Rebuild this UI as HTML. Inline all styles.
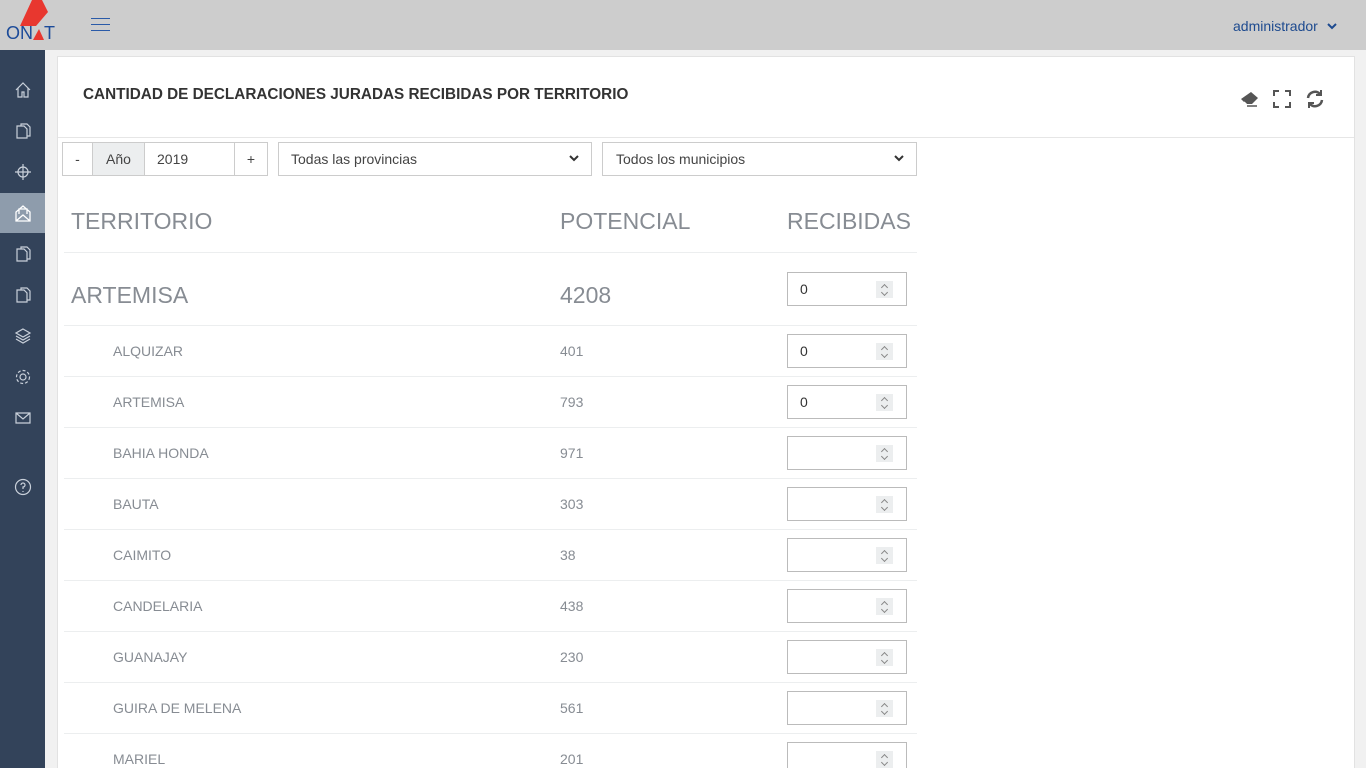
<!DOCTYPE html>
<html><head><meta charset="utf-8"><style>
*{box-sizing:border-box;margin:0;padding:0}
html,body{width:1366px;height:768px;overflow:hidden}
body{background:#f1f1f1;font-family:"Liberation Sans",sans-serif;position:relative}
.top{position:absolute;left:0;top:0;width:1366px;height:50px;background:#cdcdcd}
.side{position:absolute;left:0;top:50px;width:45px;height:718px;background:#33435a}
.side .it{position:absolute;left:0;width:45px;height:40px;display:flex;align-items:center;justify-content:center}
.panel{position:absolute;left:57px;top:56px;width:1298px;height:712px;background:#fff;border:1px solid #e2e2e2;border-bottom:none}
.ph{height:81px;border-bottom:1px solid #e6e6e6;position:relative}
.ph h1{position:absolute;left:25px;top:29px;font-size:15.3px;font-weight:bold;color:#333}
.ctl{position:absolute;top:142px;height:34px;border:1px solid #ccc;font-size:14px;color:#444;display:flex;align-items:center;background:#fff}
.chev{position:absolute;right:12px;top:12px}
.row{position:absolute;width:853px;border-bottom:1px solid #eceeef;color:#878c93}
.inp{position:absolute;left:723px;width:120px;height:34px;border:1px solid #bbb;font-size:14px;color:#333;padding-left:12px;line-height:32px}
.sp{position:absolute;right:13px;top:8px;width:17px;height:17px;background:#eceeef}
.sp:before{content:"";position:absolute;left:6px;top:4px;width:4px;height:4px;border-left:1px solid #888;border-top:1px solid #888;transform:rotate(45deg)}
.sp:after{content:"";position:absolute;left:6px;top:9px;width:4px;height:4px;border-right:1px solid #888;border-bottom:1px solid #888;transform:rotate(45deg)}
</style></head><body>
<div class="top">
<svg style="position:absolute;left:6px;top:0" width="52" height="42"><polygon points="26,0 36,0 42,12 30,26 14,26" fill="#e8372f"/>
<text x="0" y="39" font-family="Liberation Sans" font-size="18" fill="#1c4b99">ON</text><polygon points="27,40 38,40 33,29" fill="#e8372f"/><text x="38" y="39" font-family="Liberation Sans" font-size="18" fill="#1c4b99">T</text></svg>
<div style="position:absolute;left:91px;top:18px;width:19px;height:1px;background:#2a5aa8;box-shadow:0 6px 0 #2a5aa8,0 12px 0 #2a5aa8"></div>
<div style="position:absolute;left:1233px;top:18px;font-size:14px;color:#1d4a8f">administrador</div>
<svg style="position:absolute;left:1327px;top:23px" width="10" height="7" fill="none" stroke="#1d4a8f" stroke-width="2"><path d="M1 1l4 4 4-4"/></svg>
</div>
<div class="side">
<div class="it" style="top:20px"><svg width="18" height="18" fill="none" stroke="#c9d0da" stroke-width="1.2"><path d="M2 9 9 2l7 7M4 7v9h4v-5h2v5h4V7"/></svg></div>
<div class="it" style="top:61px"><svg width="18" height="18" fill="none" stroke="#c9d0da" stroke-width="1.2"><path d="M3 4h7l3 3v9H3zM7 4V2h6l3 3v9h-3"/></svg></div>
<div class="it" style="top:102px"><svg width="18" height="18" fill="none" stroke="#c9d0da" stroke-width="1.2"><circle cx="9" cy="9" r="5"/><path d="M9 1v16M1 9h16"/></svg></div>
<div class="it" style="top:143px;background:#8e9cac"><svg width="18" height="18" fill="none" stroke="#fff" stroke-width="1.3"><path d="M2 8v9h14V8L9 2zM2 17l7-6 7 6M5 10V5h8v5"/></svg></div>
<div class="it" style="top:184px"><svg width="18" height="18" fill="none" stroke="#c9d0da" stroke-width="1.2"><path d="M3 4h7l3 3v9H3zM7 4V2h6l3 3v9h-3"/></svg></div>
<div class="it" style="top:225px"><svg width="18" height="18" fill="none" stroke="#c9d0da" stroke-width="1.2"><path d="M3 4h7l3 3v9H3zM7 4V2h6l3 3v9h-3"/></svg></div>
<div class="it" style="top:266px"><svg width="18" height="18" fill="none" stroke="#c9d0da" stroke-width="1.2"><path d="M9 2l7 4-7 4-7-4zM2 9l7 4 7-4M2 12l7 4 7-4"/></svg></div>
<div class="it" style="top:307px"><svg width="18" height="18" fill="none" stroke="#c9d0da" stroke-width="1.2"><circle cx="9" cy="9" r="3"/><circle cx="9" cy="9" r="6.5" stroke-dasharray="3 2"/></svg></div>
<div class="it" style="top:348px"><svg width="18" height="18" fill="none" stroke="#c9d0da" stroke-width="1.2"><path d="M2 4h14v10H2zM2 4l7 6 7-6"/></svg></div>
<div class="it" style="top:417px"><svg width="18" height="18" fill="none" stroke="#c9d0da" stroke-width="1.2"><circle cx="9" cy="9" r="7.5"/><path d="M7 7a2 2 0 1 1 2 2v2M9 13v1"/></svg></div>
</div>
<div class="panel">
<div class="ph"><h1>CANTIDAD DE DECLARACIONES JURADAS RECIBIDAS POR TERRITORIO</h1>
<svg style="position:absolute;left:1182px;top:34px" width="20" height="16"><path d="M11 1l7 6-6 6H6L1 8z" fill="#555"/><path d="M4 11l3 3h6" stroke="#fff" stroke-width="1.5" fill="none"/><path d="M7 15h10" stroke="#555" stroke-width="1.5"/></svg>
<svg style="position:absolute;left:1215px;top:33px" width="18" height="18" fill="none" stroke="#555" stroke-width="2"><path d="M1 6V1h5M12 1h5v5M17 12v5h-5M6 17H1v-5"/></svg>
<svg style="position:absolute;left:1247px;top:32px" width="20" height="20" fill="none" stroke="#555" stroke-width="2.5"><path d="M3 9a7 7 0 0 1 12-4M17 11a7 7 0 0 1-12 4"/><path d="M16 1v5h-5M4 19v-5h5" stroke-width="2"/></svg>
</div>
</div>
<div class="ctl" style="left:62px;width:206px">
<span style="width:30px;text-align:center;border-right:1px solid #ccc;line-height:32px">-</span>
<span style="width:52px;text-align:center;background:#eceeef;border-right:1px solid #ccc;line-height:32px">Año</span>
<span style="width:90px;padding-left:12px;border-right:1px solid #ccc;line-height:32px">2019</span>
<span style="width:32px;text-align:center">+</span></div>
<div class="ctl" style="left:278px;width:314px;padding-left:12px">Todas las provincias<svg class="chev" width="10" height="8" fill="none" stroke="#333" stroke-width="2"><path d="M1 1l4 4 4-4"/></svg></div>
<div class="ctl" style="left:602px;width:315px;padding-left:13px">Todos los municipios<svg class="chev" width="10" height="8" fill="none" stroke="#333" stroke-width="2"><path d="M1 1l4 4 4-4"/></svg></div>
<div class="row" style="left:64px;top:190px;height:63px;font-size:23px"><span style="position:absolute;left:7px;top:18px">TERRITORIO</span><span style="position:absolute;left:496px;top:18px">POTENCIAL</span><span style="position:absolute;left:723px;top:18px">RECIBIDAS</span></div>
<div class="row" style="left:64px;top:253px;height:73px;font-size:23px"><span style="position:absolute;left:7px;top:29px">ARTEMISA</span><span style="position:absolute;left:496px;top:29px">4208</span><div class="inp" style="top:19px">0<div class="sp"></div></div></div>
<div id="rows"></div>
<script>
var d=[["ALQUIZAR",401,"0"],["ARTEMISA",793,"0"],["BAHIA HONDA",971,""],["BAUTA",303,""],["CAIMITO",38,""],["CANDELARIA",438,""],["GUANAJAY",230,""],["GUIRA DE MELENA",561,""],["MARIEL",201,""]];
var h="";d.forEach(function(r,i){var t=326+i*51;h+='<div class="row" style="left:64px;top:'+t+'px;height:51px;font-size:14px"><span style="position:absolute;left:49px;top:17px">'+r[0]+'</span><span style="position:absolute;left:496px;top:17px">'+r[1]+'</span><div class="inp" style="top:8px">'+r[2]+'<div class="sp"></div></div></div>';});
document.getElementById("rows").innerHTML=h;
</script>
</body></html>
